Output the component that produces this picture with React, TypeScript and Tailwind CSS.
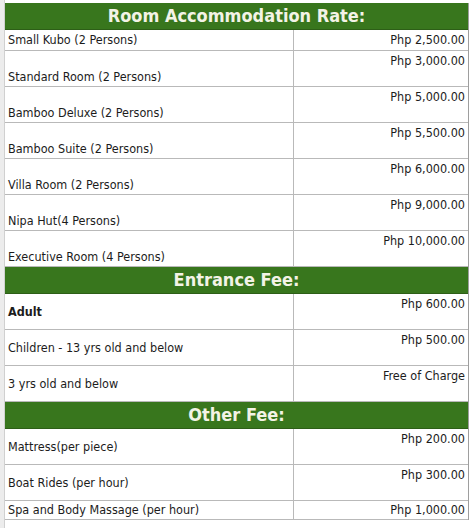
import React from "react";

type Row = { name: string; price: string; h: string; mode: "split" | "center" | "line"; bold?: boolean };

const rooms: Row[] = [
  { name: "Small Kubo (2 Persons)", price: "Php 2,500.00", h: "h-[21px]", mode: "line" },
  { name: "Standard Room (2 Persons)", price: "Php 3,000.00", h: "h-[36px]", mode: "split" },
  { name: "Bamboo Deluxe (2 Persons)", price: "Php 5,000.00", h: "h-[36px]", mode: "split" },
  { name: "Bamboo Suite (2 Persons)", price: "Php 5,500.00", h: "h-[36px]", mode: "split" },
  { name: "Villa Room (2 Persons)", price: "Php 6,000.00", h: "h-[36px]", mode: "split" },
  { name: "Nipa Hut(4 Persons)", price: "Php 9,000.00", h: "h-[36px]", mode: "split" },
  { name: "Executive Room (4 Persons)", price: "Php 10,000.00", h: "h-[36px]", mode: "split" },
];

const entrance: Row[] = [
  { name: "Adult", price: "Php 600.00", h: "h-[36px]", mode: "center", bold: true },
  { name: "Children - 13 yrs old and below", price: "Php 500.00", h: "h-[36px]", mode: "center" },
  { name: "3 yrs old and below", price: "Free of Charge", h: "h-[36px]", mode: "center" },
];

const other: Row[] = [
  { name: "Mattress(per piece)", price: "Php 200.00", h: "h-[36px]", mode: "center" },
  { name: "Boat Rides (per hour)", price: "Php 300.00", h: "h-[36px]", mode: "center" },
  { name: "Spa and Body Massage (per hour)", price: "Php 1,000.00", h: "h-[19px]", mode: "line" },
];

const Header = ({ title }: { title: string }) => (
  <div className="h-[27px] bg-[#38761d] border-b border-[#2d5e17] flex items-center justify-center text-[18px] font-bold text-[#f3f3e6] leading-none">
    {title}
  </div>
);

const FeeRow = ({ row }: { row: Row }) => {
  const nameAlign =
    row.mode === "split" ? "items-end pb-[1px]" : row.mode === "center" ? "items-center" : "items-center";
  const priceAlign = row.mode === "line" ? "items-center" : "items-start pt-[2px]";
  return (
    <div className={`flex ${row.h} border-b border-[#b9b9b9]`}>
      <div className={`w-[289px] flex ${nameAlign} pl-[3px] border-r border-[#b9b9b9] ${row.bold ? "font-bold" : ""}`}>
        {row.name}
      </div>
      <div className={`flex-1 flex justify-end ${priceAlign} pr-[3px]`}>{row.price}</div>
    </div>
  );
};

export default function App() {
  return (
    <div
      className="w-[474px] h-[528px] bg-white flex text-[12.5px] leading-[16px] text-[#1c1c1c] overflow-hidden"
      style={{ fontFamily: '"DejaVu Sans Condensed", "DejaVu Sans", sans-serif' }}
    >
      <div className="w-[5px] bg-[#ececec] border-r border-[#d0d0d0]" />
      <div className="w-[464px] pt-[3px]">
        <div className="border-r border-[#9e9e9e]">
          <Header title="Room Accommodation Rate:" />
          {rooms.map((r) => (
            <FeeRow key={r.name} row={r} />
          ))}
          <Header title="Entrance Fee:" />
          {entrance.map((r) => (
            <FeeRow key={r.name} row={r} />
          ))}
          <Header title="Other Fee:" />
          {other.map((r) => (
            <FeeRow key={r.name} row={r} />
          ))}
        </div>
      </div>
    </div>
  );
}
